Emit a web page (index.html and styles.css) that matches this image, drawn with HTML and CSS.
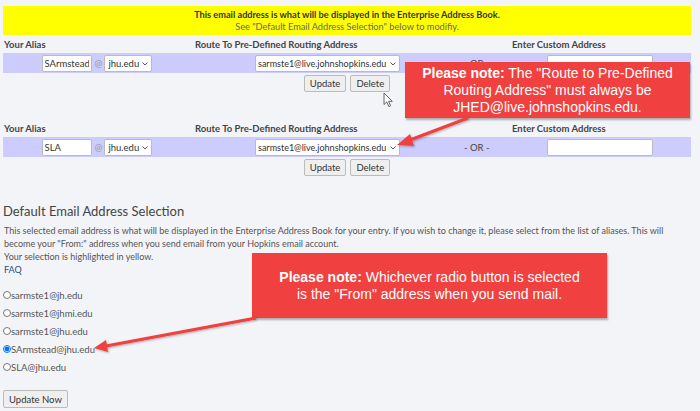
FILE: index.html
```html
<!DOCTYPE html>
<html>
<head>
	<title>Email Aliases</title>
	<link rel="stylesheet" href="styles.css">
</head>
<body>
	<div class="page">
		<div class="banner">
			<div class="banner-main">This email address is what will be displayed in the Enterprise Address Book.</div>
			<div class="banner-sub">See "Default Email Address Selection" below to modifiy.</div>
		</div>

		<div class="alias-block">
			<div class="alias-grid head">
				<div class="th first">Your Alias</div>
				<div class="th">Route To Pre-Defined Routing Address</div>
				<div class="th"></div>
				<div class="th">Enter Custom Address</div>
			</div>
			<div class="alias-grid row">
				<div class="cell center">
					<input class="alias-input" type="text" value="SArmstead">
					<span class="at">@</span>
					<span class="select-wrap">
						<select class="domain"><option>jhu.edu</option></select>
						<svg class="chev" width="6" height="4" viewBox="0 0 6 4"><path d="M0.5 0.5 L3 3 L5.5 0.5" fill="none" stroke="#444" stroke-width="0.9"/></svg>
					</span>
				</div>
				<div class="cell center">
					<span class="select-wrap">
						<select class="route"><option>sarmste1@live.johnshopkins.edu</option></select>
						<svg class="chev" width="6" height="4" viewBox="0 0 6 4"><path d="M0.5 0.5 L3 3 L5.5 0.5" fill="none" stroke="#444" stroke-width="0.9"/></svg>
					</span>
				</div>
				<div class="cell or">- OR -</div>
				<div class="cell center">
					<input class="custom-input" type="text">
				</div>
			</div>
			<div class="actions">
				<button class="btn">Update</button>
				<button class="btn">Delete</button>
			</div>
		</div>

		<div class="alias-block">
			<div class="alias-grid head">
				<div class="th first">Your Alias</div>
				<div class="th">Route To Pre-Defined Routing Address</div>
				<div class="th"></div>
				<div class="th">Enter Custom Address</div>
			</div>
			<div class="alias-grid row">
				<div class="cell center">
					<input class="alias-input" type="text" value="SLA">
					<span class="at">@</span>
					<span class="select-wrap">
						<select class="domain"><option>jhu.edu</option></select>
						<svg class="chev" width="6" height="4" viewBox="0 0 6 4"><path d="M0.5 0.5 L3 3 L5.5 0.5" fill="none" stroke="#444" stroke-width="0.9"/></svg>
					</span>
				</div>
				<div class="cell center">
					<span class="select-wrap">
						<select class="route"><option>sarmste1@live.johnshopkins.edu</option></select>
						<svg class="chev" width="6" height="4" viewBox="0 0 6 4"><path d="M0.5 0.5 L3 3 L5.5 0.5" fill="none" stroke="#444" stroke-width="0.9"/></svg>
					</span>
				</div>
				<div class="cell or">- OR -</div>
				<div class="cell center">
					<input class="custom-input" type="text">
				</div>
			</div>
			<div class="actions">
				<button class="btn">Update</button>
				<button class="btn">Delete</button>
			</div>
		</div>

		<h2 class="section-title">Default Email Address Selection</h2>
		<p class="intro">This selected email address is what will be displayed in the Enterprise Address Book for your entry. If you wish to change it, please select from the list of aliases. This will become your "From:" address when you send email from your Hopkins email account.<br>Your selection is highlighted in yellow.</p>
		<a class="faq" href="#">FAQ</a>

		<div class="choices">
			<label class="choice"><input type="radio" name="from">sarmste1@jh.edu</label>
			<label class="choice"><input type="radio" name="from">sarmste1@jhmi.edu</label>
			<label class="choice"><input type="radio" name="from">sarmste1@jhu.edu</label>
			<label class="choice"><input type="radio" name="from" checked>SArmstead@jhu.edu</label>
			<label class="choice"><input type="radio" name="from">SLA@jhu.edu</label>
		</div>

		<button class="btn update-now">Update Now</button>
	</div>

	<!-- annotations laid over the page -->
	<div class="callout callout-route"><div><b>Please note:</b> The "Route to Pre-Defined Routing Address" must always be JHED@live.johnshopkins.edu.</div></div>
	<div class="callout callout-radio"><div><b>Please note:</b> Whichever radio button is selected<br>is the "From" address when you send mail.</div></div>

	<svg class="arrows" width="700" height="411" viewBox="0 0 700 411">
		<defs>
			<filter id="sh" x="-10%" y="-10%" width="130%" height="130%">
				<feDropShadow dx="1" dy="1" stdDeviation="0.8" flood-color="#000" flood-opacity="0.3"/>
			</filter>
		</defs>
		<g fill="#f0403f" stroke="#f0403f" filter="url(#sh)">
			<line x1="468" y1="118" x2="410" y2="140" stroke-width="3"/>
			<polygon points="397,145 410,134 414,146" stroke="none"/>
			<line x1="256" y1="318" x2="106" y2="346" stroke-width="3"/>
			<polygon points="94,348 106,340 108,352" stroke="none"/>
		</g>
	</svg>

	<svg class="cursor" width="12" height="16" viewBox="0 0 12 16">
		<path d="M1 1 L1 12.5 L3.8 9.9 L5.9 14.6 L7.6 13.8 L5.6 9.3 L9.3 9.3 Z" fill="#fff" stroke="#555" stroke-width="0.9" stroke-linejoin="round"/>
	</svg>
</body>
</html>
```

FILE: styles.css
```css
body {
	margin: 0;
	background-color: #f3f4f8;
	font-family: Lato, "Open Sans", sans-serif;
	color: #444;
}
.page {
	padding: 6px 9px 0 3px;
}
.banner {
	height: 29px;
	background-color: #ffff00;
	text-align: center;
	font-size: 9.2px;
	line-height: 12px;
	padding-top: 3px;
	box-sizing: border-box;
}
.banner-main {
	font-weight: bold;
	color: #333;
}
.banner-sub {
	color: #666;
}
.alias-block {
	margin-bottom: 27px;
}
.alias-grid {
	display: grid;
	grid-template-columns: 188px 273px 44px 183px;
}
.head {
	height: 18px;
	align-items: center;
}
.th {
	font-size: 9.5px;
	font-weight: bold;
	color: #444;
	padding-left: 4px;
}
.th.first {
	padding-left: 1px;
}
.row {
	height: 20px;
	background-color: #ccccff;
	align-items: center;
}
.cell {
	display: flex;
	align-items: center;
	font-size: 9.5px;
}
.cell.center {
	justify-content: center;
}
.cell.or {
	padding-top: 1px;
}
input[type="text"] {
	box-sizing: border-box;
	height: 17px;
	border: 1px solid #bbb;
	border-radius: 2px;
	background: #fff;
	font-family: inherit;
	font-size: 9.5px;
	color: #333;
	padding: 0 2px;
	margin: 0;
}
.alias-input {
	width: 50px;
}
.custom-input {
	width: 106px;
}
.at {
	color: #999;
	margin: 0 2px 0 3px;
	font-size: 9.5px;
}
.select-wrap {
	position: relative;
	display: inline-flex;
}
select {
	appearance: none;
	-webkit-appearance: none;
	box-sizing: border-box;
	height: 17px;
	border: 1px solid #bbb;
	border-radius: 2px;
	background-color: #fff;
	font-family: inherit;
	font-size: 9.5px;
	color: #333;
	margin: 0;
	padding: 0 10px 0 3px;
}
.chev {
	position: absolute;
	right: 4px;
	top: 7px;
}
.domain {
	width: 48px;
}
.route {
	width: 145px;
	font-size: 9px;
	padding: 0 9px 0 2px;
}
.actions {
	display: flex;
	justify-content: center;
	gap: 4px;
	margin-top: 2px;
}
.btn {
	height: 17px;
	padding: 0 5px;
	border: 1px solid #bbb;
	border-radius: 2px;
	background-color: #efefef;
	font-family: inherit;
	font-size: 9.5px;
	color: #333;
	margin: 0;
}
.section-title {
	margin: 2px 0 0 0;
	font-size: 13px;
	font-weight: normal;
	color: #444;
	line-height: 16px;
}
.intro {
	margin: 5px 0 0 1px;
	font-size: 9px;
	line-height: 13px;
	color: #555;
}
.faq {
	display: block;
	margin-left: 1px;
	font-size: 9px;
	line-height: 13px;
	color: #1d4f91;
	text-decoration: none;
}
.choices {
	margin-top: 10px;
}
.choice {
	display: flex;
	align-items: center;
	height: 18px;
	font-size: 9.5px;
	color: #555;
}
.choice input {
	width: 8px;
	height: 8px;
	margin: 0;
}
.update-now {
	margin-top: 14px;
	height: 18px;
	padding: 0 5px;
}
.callout {
	position: absolute;
	display: flex;
	align-items: center;
	justify-content: center;
	text-align: center;
	background-color: #f0403f;
	color: #fff;
	font-family: "Liberation Sans", Arial, sans-serif;
	font-size: 14px;
	line-height: 17px;
	box-shadow: 1px 2px 2px rgba(0, 0, 0, 0.3);
	z-index: 2;
}
.callout-route {
	left: 405px;
	top: 62px;
	width: 285px;
	height: 56px;
}
.callout-radio {
	left: 252px;
	top: 253px;
	width: 355px;
	height: 65px;
}
.arrows {
	position: absolute;
	left: 0;
	top: 0;
	z-index: 3;
	pointer-events: none;
}
.cursor {
	position: absolute;
	left: 383px;
	top: 92px;
}
```
